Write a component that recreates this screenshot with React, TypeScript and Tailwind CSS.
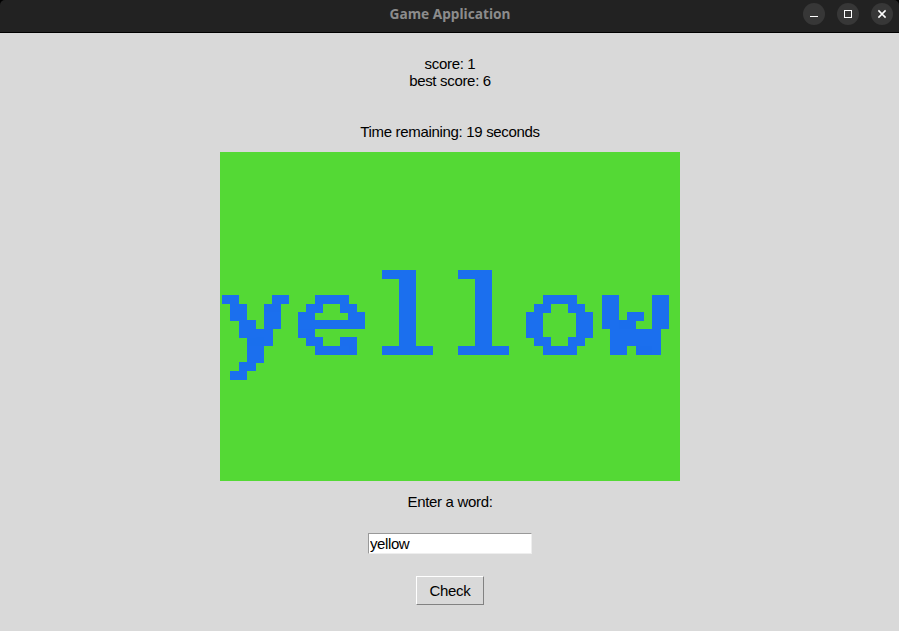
import { useState } from "react";

const label = "text-center text-[15px] leading-[17px] tracking-[-0.32px] whitespace-nowrap";
const ctl = "flex h-[22px] w-[22px] items-center justify-center rounded-full bg-[#373737]";

function TitleBar() {
  return (
    <header className="h-[33px] shrink-0 bg-black pb-px">
      <div className="grid h-8 grid-cols-[1fr_auto_1fr] rounded-t-[5px] bg-[#222222] pb-1 pr-[6px] pl-[7px]">
        <span />
        <h1 className="self-center font-['Noto_Sans',sans-serif] text-[13.7px] leading-5 font-bold text-[#8c8c8c]">
          Game Application
        </h1>
        <div className="flex items-center justify-end gap-3">
          <button className={ctl} aria-label="Minimize">
            <svg width="22" height="22"><path d="M7 13.5h8" stroke="#fff" shapeRendering="crispEdges" /></svg>
          </button>
          <button className={ctl} aria-label="Maximize">
            <svg width="22" height="22"><rect x="7.5" y="7.5" width="7" height="7" fill="none" stroke="#fff" shapeRendering="crispEdges" /></svg>
          </button>
          <button className={ctl} aria-label="Close">
            <svg width="22" height="22"><path d="M7.4 7.4l7.2 7.2M14.6 7.4l-7.2 7.2" stroke="#fff" strokeWidth="1.5" /></svg>
          </button>
        </div>
      </div>
    </header>
  );
}

// Size of one low-resolution cell on the canvas.
const CELL_W = 8.444;
const CELL_H = 8.4;
const LEFT = 2.3;
const TOP = 118.5;
const columns = Array.from({ length: 54 }, (_, i) => Math.floor(LEFT + CELL_W * i) + 4);
const rows = Array.from({ length: 13 }, (_, i) => Math.floor(TOP + CELL_H * i) + 4);

type Face = { font: string; size: number; sx: number; sy: number; dx: number };
const light = "font-['Inter',sans-serif] font-light";
const round: Face = { font: light, size: 104, sx: 1.07, sy: 1, dx: 29.2 };
const faces: Record<string, Face> = {
  y: { font: "font-['Roboto',sans-serif] font-light", size: 108, sx: 1.22, sy: 1.03, dx: 30 },
  l: { font: "font-['DejaVu_Serif',serif]", size: 110, sx: 1.33, sy: 1, dx: 31.4 },
  w: { font: "font-['DejaVu_Sans_Mono',monospace]", size: 108, sx: 1.06, sy: 1.04, dx: 29.2 },
};

function WordCanvas({ word }: { word: string }) {
  return (
    <svg width="460" height="329" className="mt-[12px] block shrink-0 bg-[#54d935]">
      <defs>
        <clipPath id="cols">
          {columns.map((x) => <rect key={x} x={x} y="100" width="1" height="140" />)}
        </clipPath>
        <clipPath id="rows">
          {rows.map((y) => <rect key={y} x="0" y={y} width="460" height="1" />)}
        </clipPath>
        <filter id="cells" filterUnits="userSpaceOnUse" x="0" y="100" width="460" height="140" colorInterpolationFilters="sRGB">
          <feComponentTransfer>
            <feFuncA type="discrete" tableValues="0 0 1 1 1" />
          </feComponentTransfer>
          <feMorphology operator="dilate" radius="4" result="px" />
          <feOffset in="px" dx="8" result="bold" />
          <feMerge>
            <feMergeNode in="px" />
            <feMergeNode in="bold" />
          </feMerge>
        </filter>
      </defs>
      <g filter="url(#cells)">
        <g clipPath="url(#cols)">
          <g clipPath="url(#rows)">
            {word.split("").map((ch, i) => {
              const f = faces[ch] ?? round;
              return (
                <text
                  key={i}
                  transform={`translate(${LEFT + CELL_W * 9 * i + f.dx} 202) scale(${f.sx} ${f.sy})`}
                  textAnchor="middle"
                  fontSize={f.size}
                  fill="#1b6fee"
                  className={f.font}
                >
                  {ch}
                </text>
              );
            })}
          </g>
        </g>
      </g>
    </svg>
  );
}

export default function App() {
  const [guess, setGuess] = useState("yellow");
  return (
    <div className="flex h-[631px] w-[899px] flex-col overflow-hidden bg-[#d9d9d9] font-['Liberation_Sans',sans-serif] text-black">
      <TitleBar />
      <main className="flex flex-col items-center pt-[22px] pl-px">
        <p className={label}>score: 1</p>
        <p className={label}>best score: 6</p>
        <p className={label + " mt-[34px]"}>Time remaining: 19 seconds</p>
        <WordCanvas word="yellow" />
        <label htmlFor="word" className={label + " mt-[12px]"}>Enter a word:</label>
        <input
          id="word"
          value={guess}
          onChange={(e) => setGuess(e.target.value)}
          className="mt-[23px] h-[21px] w-[164px] border border-t-[#999] border-r-[#eee] border-b-[#eee] border-l-[#999] bg-white px-px text-[15px] leading-[17px] tracking-[-0.4px] outline-none"
        />
        <button className="mt-[22px] h-[29px] w-[68px] border border-t-white border-r-[#828282] border-b-[#828282] border-l-white text-[15px] leading-[17px] tracking-[-0.3px]">
          Check
        </button>
      </main>
    </div>
  );
}
